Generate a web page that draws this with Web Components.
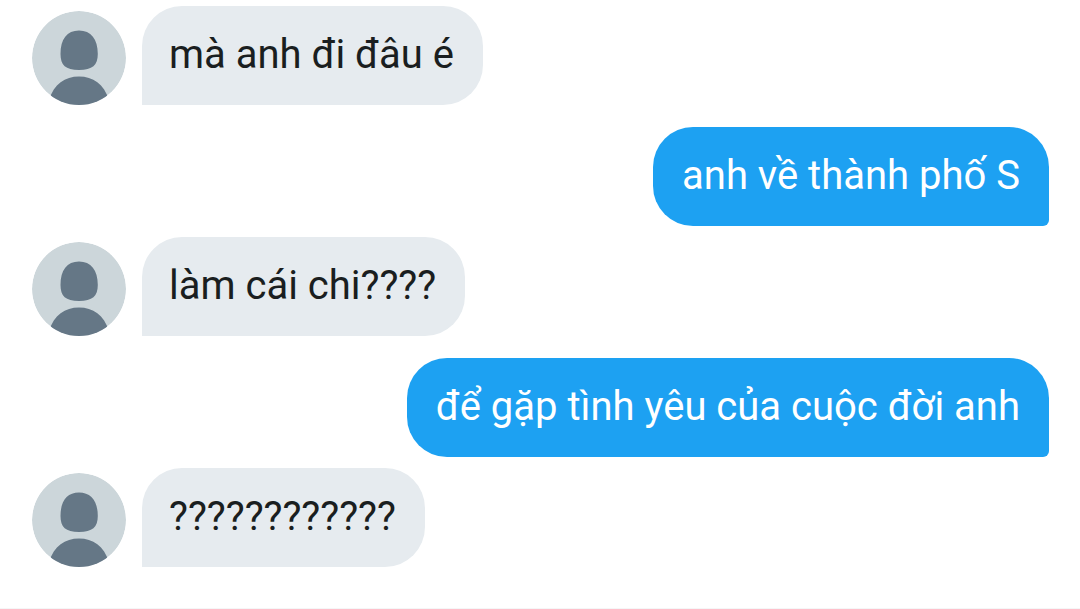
<!DOCTYPE html>
<html lang="vi">
<head>
<meta charset="utf-8">
<meta name="viewport" content="width=device-width, initial-scale=1">
<title>Chat</title>
<style>
body { margin: 0; background: #fff; font-family: Roboto, "Noto Sans", sans-serif; }
</style>
</head>
<body>
<chat-thread>
  <chat-message>mà anh đi đâu é</chat-message>
  <chat-message own>anh về thành phố S</chat-message>
  <chat-message>làm cái chi????</chat-message>
  <chat-message own>để gặp tình yêu của cuộc đời anh</chat-message>
  <chat-message>????????????</chat-message>
</chat-thread>
<script>
class ChatThread extends HTMLElement {
  constructor() {
    super();
    this.attachShadow({ mode: "open" }).innerHTML = `
      <style>
        :host { display: block; min-height: 100vh; box-sizing: border-box; border-bottom: 1px solid #f5f6f7; }
        main { display: flex; flex-direction: column; gap: 11px; padding: 6px 31px 20px 32px; }
      </style>
      <main><slot></slot></main>`;
  }
}
class UserAvatar extends HTMLElement {
  constructor() {
    super();
    this.attachShadow({ mode: "open" }).innerHTML = `
      <style>
        :host { display: block; width: 94px; height: 94px; border-radius: 50%; overflow: hidden; }
        svg { display: block; width: 100%; height: 100%; }
      </style>
      <svg viewBox="0 0 94 94" aria-hidden="true">
        <circle cx="47" cy="47" r="47" fill="#ccd6da"/>
        <path fill="#657786" d="M47 19.5C59 19.5 65.8 28 65.8 43C65.8 54 60.5 59 47 59S28.500 54 28.500 43C28.500 28 35 19.500 47 19.500ZM17 89C22 73 33 65.500 47 65.500S72 73 77 89V94H17Z"/>
      </svg>`;
  }
}
class ChatMessage extends HTMLElement {
  constructor() {
    super();
    this.attachShadow({ mode: "open" }).innerHTML = `
      <style>
        :host { display: flex; align-items: flex-end; gap: 16px; }
        :host([own]) { justify-content: flex-end; margin-top: 11px; }
        :host([own]) user-avatar { display: none; }
        .bubble { padding: 25px 29px 26px 27px; border-radius: 40px 40px 40px 0; background: #e6ebef; color: #1a1e20; font-size: 40px; line-height: 48px; }
        :host([own]) .bubble { padding-left: 29px; border-radius: 40px 40px 6px 40px; background: #1da1f2; color: #fff; }
      </style>
      <user-avatar></user-avatar>
      <div class="bubble"><slot></slot></div>`;
  }
}
customElements.define("user-avatar", UserAvatar);
customElements.define("chat-message", ChatMessage);
customElements.define("chat-thread", ChatThread);
</script>
</body>
</html>
